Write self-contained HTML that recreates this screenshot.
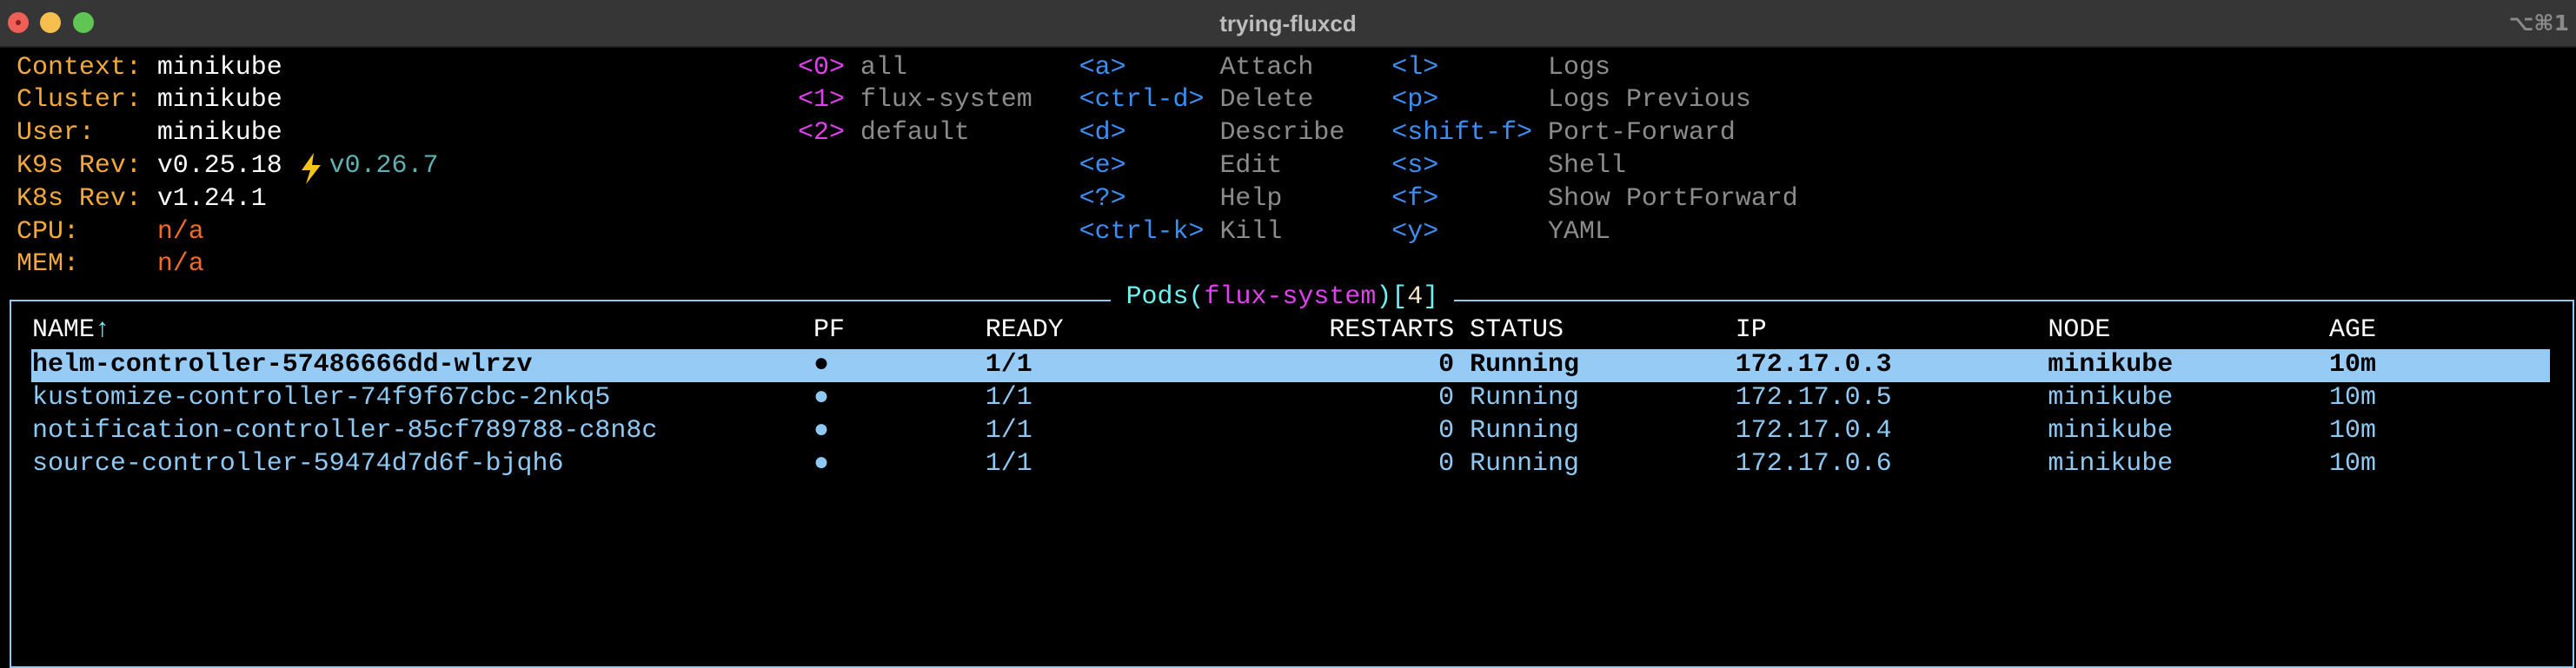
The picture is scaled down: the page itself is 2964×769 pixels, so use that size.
<!DOCTYPE html>
<html><head><meta charset="utf-8"><style>
html,body{margin:0;padding:0;background:#000;width:2964px;height:708px;overflow:hidden}
.tb{position:absolute;left:0;top:0;width:2964px;height:53px;background:#363636;border-bottom:2px solid #1e1e1e}
.dot{position:absolute;top:14px;width:24px;height:24px;border-radius:50%}
.title{position:absolute;left:0;width:2964px;top:12px;text-align:center;font:bold 26px "Liberation Sans",sans-serif;color:#bdbdbd}
.sc{position:absolute;right:8px;top:12px;font:bold 25px "DejaVu Sans",sans-serif;color:#8a8a8a}
.r{position:absolute;left:0;width:2964px;height:37.8px;line-height:37.8px;font-family:"Liberation Mono","DejaVu Sans Mono",monospace;font-size:29.97px;white-space:pre}
.r i{font-style:normal;position:absolute;top:0;left:calc(19px + var(--c)*17.98px)}
.o{color:#f2a93b}.w{color:#fff}.n{color:#f26b2a}.m{color:#e040f0}.b{color:#3c8ef5}.g{color:#8b8b8b}.t{color:#5fb0b0}
.box{position:absolute;left:11px;top:345px;width:2947px;height:420px;border:2px solid #8ec9f3}
.lb{color:#8ec9f3}
.hl{position:absolute;left:36px;width:2898px;top:402px;height:38px;background:#96cbf5}
.sel{color:#000;font-weight:bold}
</style></head><body>
<div class="tb">
<div class="dot" style="left:9px;background:#ee5f58"><div style="position:absolute;left:9px;top:9px;width:6px;height:6px;border-radius:50%;background:#8a1f1a"></div></div>
<div class="dot" style="left:46px;background:#f6be4f"></div>
<div class="dot" style="left:84px;background:#5fc653"></div>
<div class="title">trying-fluxcd</div>
<div class="sc">⌥⌘1</div>
</div>

<div class="r" style="top:58.6px"><i class="o" style="--c:0">Context:</i><i class="w" style="--c:9">minikube</i><i class="m" style="--c:50">&lt;0&gt;</i><i class="g" style="--c:54">all</i><i class="b" style="--c:68">&lt;a&gt;</i><i class="g" style="--c:77">Attach</i><i class="b" style="--c:88">&lt;l&gt;</i><i class="g" style="--c:98">Logs</i></div>
<div class="r" style="top:96.4px"><i class="o" style="--c:0">Cluster:</i><i class="w" style="--c:9">minikube</i><i class="m" style="--c:50">&lt;1&gt;</i><i class="g" style="--c:54">flux-system</i><i class="b" style="--c:68">&lt;ctrl-d&gt;</i><i class="g" style="--c:77">Delete</i><i class="b" style="--c:88">&lt;p&gt;</i><i class="g" style="--c:98">Logs Previous</i></div>
<div class="r" style="top:134.2px"><i class="o" style="--c:0">User:</i><i class="w" style="--c:9">minikube</i><i class="m" style="--c:50">&lt;2&gt;</i><i class="g" style="--c:54">default</i><i class="b" style="--c:68">&lt;d&gt;</i><i class="g" style="--c:77">Describe</i><i class="b" style="--c:88">&lt;shift-f&gt;</i><i class="g" style="--c:98">Port-Forward</i></div>
<div class="r" style="top:172px"><i class="o" style="--c:0">K9s Rev:</i><i class="w" style="--c:9">v0.25.18</i><i style="--c:18;top:4px"><svg width="30" height="36" viewBox="0 0 30 36"><path d="M18 0 L4 20 H14 L9 36 L26 14 H16 Z" fill="#f5c518"/></svg></i><i class="t" style="--c:20">v0.26.7</i><i class="b" style="--c:68">&lt;e&gt;</i><i class="g" style="--c:77">Edit</i><i class="b" style="--c:88">&lt;s&gt;</i><i class="g" style="--c:98">Shell</i></div>
<div class="r" style="top:209.8px"><i class="o" style="--c:0">K8s Rev:</i><i class="w" style="--c:9">v1.24.1</i><i class="b" style="--c:68">&lt;?&gt;</i><i class="g" style="--c:77">Help</i><i class="b" style="--c:88">&lt;f&gt;</i><i class="g" style="--c:98">Show PortForward</i></div>
<div class="r" style="top:247.6px"><i class="o" style="--c:0">CPU:</i><i class="n" style="--c:9">n/a</i><i class="b" style="--c:68">&lt;ctrl-k&gt;</i><i class="g" style="--c:77">Kill</i><i class="b" style="--c:88">&lt;y&gt;</i><i class="g" style="--c:98">YAML</i></div>
<div class="r" style="top:285.4px"><i class="o" style="--c:0">MEM:</i><i class="n" style="--c:9">n/a</i></div>

<div class="box"></div>
<div class="r" style="top:323.2px"><i style="--c:70;background:#000;width:395px">&nbsp;<span style="color:#6ef0f0">Pods(</span><span class="m">flux-system</span><span style="color:#6ef0f0">)[</span><span style="color:#f5e6c8">4</span><span style="color:#6ef0f0">]</span>&nbsp;</i></div>

<div class="r w" style="top:361px"><i style="--c:1">NAME<span style="color:#6ef0f0">↑</span></i><i style="--c:51">PF</i><i style="--c:62">READY</i><i style="--c:84">RESTARTS</i><i style="--c:93">STATUS</i><i style="--c:110">IP</i><i style="--c:130">NODE</i><i style="--c:148">AGE</i></div>
<div class="hl"></div>
<div class="r sel" style="top:401px"><i style="--c:1">helm-controller-57486666dd-wlrzv</i><i style="--c:51">●</i><i style="--c:62">1/1</i><i style="--c:91">0</i><i style="--c:93">Running</i><i style="--c:110">172.17.0.3</i><i style="--c:130">minikube</i><i style="--c:148">10m</i></div>
<div class="r lb" style="top:439px"><i style="--c:1">kustomize-controller-74f9f67cbc-2nkq5</i><i style="--c:51">●</i><i style="--c:62">1/1</i><i style="--c:91">0</i><i style="--c:93">Running</i><i style="--c:110">172.17.0.5</i><i style="--c:130">minikube</i><i style="--c:148">10m</i></div>
<div class="r lb" style="top:477px"><i style="--c:1">notification-controller-85cf789788-c8n8c</i><i style="--c:51">●</i><i style="--c:62">1/1</i><i style="--c:91">0</i><i style="--c:93">Running</i><i style="--c:110">172.17.0.4</i><i style="--c:130">minikube</i><i style="--c:148">10m</i></div>
<div class="r lb" style="top:515px"><i style="--c:1">source-controller-59474d7d6f-bjqh6</i><i style="--c:51">●</i><i style="--c:62">1/1</i><i style="--c:91">0</i><i style="--c:93">Running</i><i style="--c:110">172.17.0.6</i><i style="--c:130">minikube</i><i style="--c:148">10m</i></div>
</body></html>
